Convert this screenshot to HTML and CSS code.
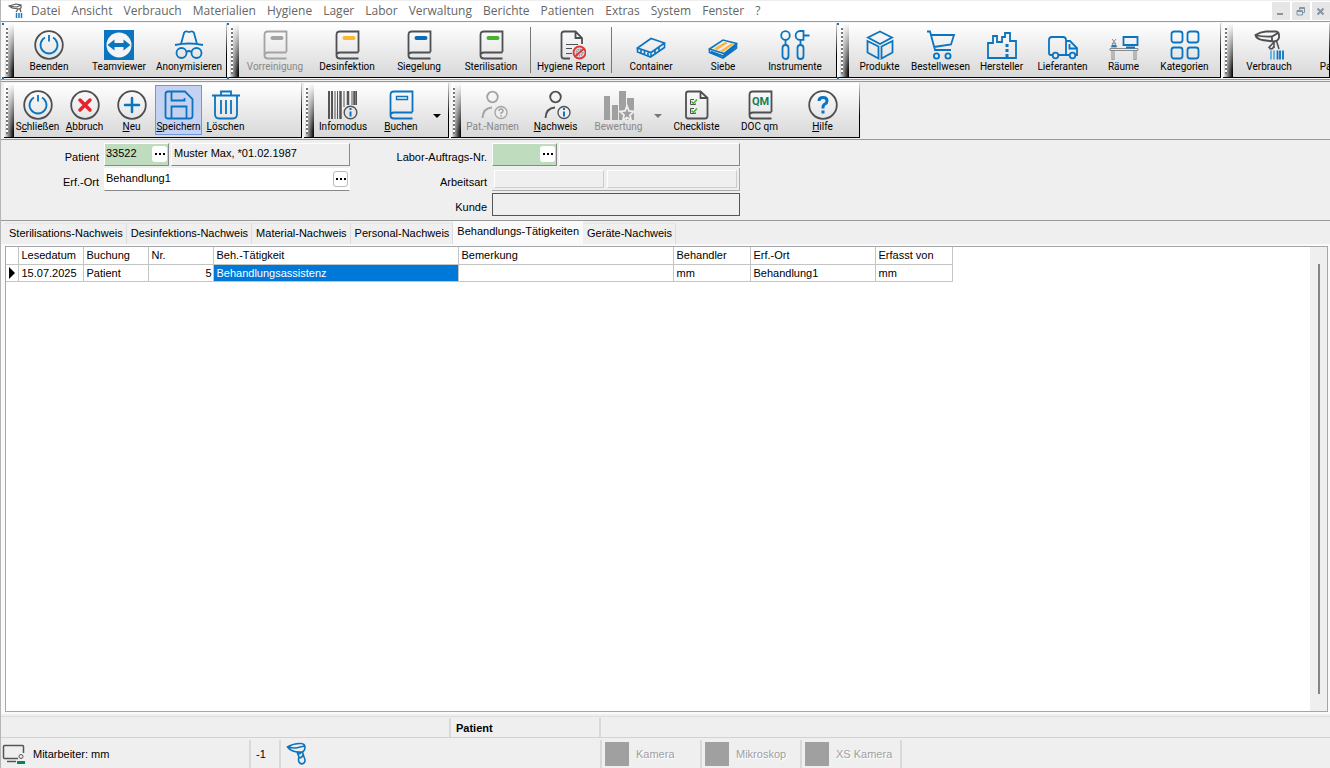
FILE: index.html
```html
<!DOCTYPE html>
<html lang="de">
<head>
<meta charset="utf-8">
<title>Behandlungs-Tätigkeiten</title>
<link rel="stylesheet" href="styles.css">
</head>
<body>
<svg class="defs" aria-hidden="true">
  <symbol id="power" viewBox="0 0 30 30"><circle cx="15" cy="15" r="13.800" class="d"/><path class="b" d="M11 7.500A8.500 8.500 0 1 0 19 7.500M15 5v6.500"/></symbol>
  <symbol id="book" viewBox="0 0 30 30"><path d="M26.500 22V1.500H8Q4.500 1.500 4.500 5V25.500Q4.500 28.500 8 28.500H26.500M4.500 25Q4.500 22.500 8 22.500H26.500"/></symbol>
  <symbol id="person" viewBox="0 0 30 30"><circle cx="14.500" cy="7" r="5.300"/><path d="M4.500 28Q5 18 14 17.500"/></symbol>
</svg>
<div class="app">
  <header class="menubar">
    <svg class="logo" viewBox="0 0 16 16"><path d="M1 3L8 1L13 2V5L11 6L4 5ZM3 3.500L9 4L12 2.500M10 6L8 9M12 6L13 9" fill="none" stroke="#555" stroke-width="1.200"/><path d="M8.500 10v5M11 10v5M13.500 10v5" stroke="#1a7cc4" stroke-width="1.500"/></svg>
    <nav class="menus">
      <button>Datei</button><button>Ansicht</button><button>Verbrauch</button><button>Materialien</button><button>Hygiene</button><button>Lager</button><button>Labor</button><button>Verwaltung</button><button>Berichte</button><button>Patienten</button><button>Extras</button><button>System</button><button>Fenster</button><button>?</button>
    </nav>
    <div class="winbtns">
      <button aria-label="Minimieren"><svg viewBox="0 0 17 17"><path d="M5 11h6" stroke-width="2"/></svg></button>
      <button aria-label="Wiederherstellen"><svg viewBox="0 0 17 17"><path d="M7.500 7V4.500h5v5h-2M5 7.500h5.500v4.500H5zM5 8.500h5M7.500 5.500h5"/></svg></button>
      <button aria-label="Schließen"><svg viewBox="0 0 17 17"><path d="M5.500 5.500l6 6M11.500 5.500l-6 6" stroke-width="2"/></svg></button>
    </div>
  </header>

  <div class="toolbar">
    <div class="group marks w70 g-start">
      <i class="grip"></i>
      <button class="tool"><svg><use href="#power"/></svg>Beenden</button>
      <button class="tool"><svg viewBox="0 0 30 30"><path fill="#0b74c0" d="M0 0h30v30H0z"/><circle cx="15" cy="15" r="12.500" fill="#f4f4f4"/><path fill="#0b74c0" d="M3.500 15l7-5.500v3.500h9V9.500l7 5.500-7 5.500V17h-9v3.500z"/></svg>Teamviewer</button>
      <button class="tool"><svg viewBox="0 0 30 30" class="b"><path d="M1 15Q15 12 29 15M7 14L10 3Q11 1 13 1.500L15 2L17 1.500Q19 1 20 3L23 14"/><circle cx="7.500" cy="23" r="5"/><circle cx="22.500" cy="23" r="5"/><path d="M12.500 22Q15 20 17.500 22"/></svg>Anonymisieren</button>
    </div>
    <div class="group marks w72">
      <i class="grip"></i>
      <button class="tool" disabled><svg viewBox="0 0 30 30" class="g"><use href="#book"/><path d="M12.500 8h9" stroke-width="4" stroke-linecap="round"/></svg>Vorreinigung</button>
      <button class="tool"><svg viewBox="0 0 30 30" class="d"><use href="#book"/><path d="M12.500 8h9" stroke="#fcb92c" stroke-width="4" stroke-linecap="round"/></svg>Desinfektion</button>
      <button class="tool"><svg viewBox="0 0 30 30" class="d"><use href="#book"/><path d="M12.500 8h9" stroke="#0b6cb8" stroke-width="4" stroke-linecap="round"/></svg>Siegelung</button>
      <button class="tool"><svg viewBox="0 0 30 30" class="d"><use href="#book"/><path d="M12.500 8h9" stroke="#4bb22e" stroke-width="4" stroke-linecap="round"/></svg>Sterilisation</button>
      <i class="sep"></i>
      <button class="tool report"><svg viewBox="0 0 30 30" class="d"><path d="M14 28.500H8Q5.500 28.500 5.500 26V4Q5.500 1.500 8 1.500H19.500L26 8V14M19.500 1.500V8H26"/><path d="M10 14.500h12M10 18.500h6M10 23.500h6" stroke-width="1.200"/><circle cx="23.500" cy="22.500" r="6" fill="#ddd" stroke="#d9393c"/><circle cx="23.500" cy="22.500" r="3" stroke="#888" stroke-dasharray="1 1"/><path d="M28 18.500l-9 8" stroke="#d9393c"/></svg>Hygiene Report</button>
      <i class="sep"></i>
      <button class="tool"><svg viewBox="0 0 30 30" class="b thin"><path d="M1.500 18L15 8.500L28.500 13L15 22.500ZM1.500 18V22L14.500 27L28.500 17.500V13M15 22.500V27M5 19.500v4M8.500 20.500v4M12 21.500v4M19 20v4M23 17v4"/></svg>Container</button>
      <button class="tool"><svg viewBox="0 0 30 30" class="b thin"><path d="M1.500 19L15 10L28.500 13.500L16 23.500ZM1.500 19V22.500L15 28L28.500 18V13.500M3 21.500L15 26L28 16"/><path d="M6 18.500L17 12L20 13L9 20ZM12 21L23 13.500L26 14L15 22Z" fill="#fcb337" stroke="none"/></svg>Siebe</button>
      <button class="tool"><svg viewBox="0 0 30 30" class="b"><circle cx="5.500" cy="5.500" r="4.300"/><path d="M5.500 10v5M20.500 10v5M23.500 5.500h6M23.500 1H20A4.400 4.400 0 0 0 20 9.800H23.500ZM23.500 1v9"/><rect x="2.500" y="15" width="6" height="14" rx="3"/><rect x="17.500" y="15" width="6" height="14" rx="3"/></svg>Instrumente</button>
    </div>
    <div class="group marks w61">
      <i class="grip"></i>
      <button class="tool"><svg viewBox="0 0 30 30" class="b"><path d="M15 1.500L27 7.500L15 14L3 7.500ZM2.500 11L13.500 16.500V28.500L2.500 22.500ZM27.500 11L16.500 16.500V28.500L27.500 22.500Z"/></svg>Produkte</button>
      <button class="tool"><svg viewBox="0 0 30 30" class="b"><path d="M1 1.500H4L9 20H25M5.500 5H28L25 14.500L8 17"/><circle cx="10.500" cy="26" r="2.600"/><circle cx="22" cy="26" r="2.600"/></svg>Bestellwesen</button>
      <button class="tool"><svg viewBox="0 0 30 30" class="b"><path d="M1 28V13H6V6H10V12H15V7H18V3H23V11H29V28Z"/><path d="M20 14v3M20 19v3M20 24v3" stroke-width="3"/></svg>Hersteller</button>
      <button class="tool"><svg viewBox="0 0 30 30" class="b"><path d="M5 25H3Q1 25 1 23V10Q1 7 4 7H15Q18 7 18 10V25H10M18 11H22L29 18V25H27M21.500 14v4.500H28M18 25h4"/><circle cx="7.500" cy="25.500" r="2.800"/><circle cx="24.500" cy="25.500" r="2.800"/></svg>Lieferanten</button>
      <button class="tool"><svg viewBox="0 0 30 30"><path d="M1 18.500H29V20.500H1ZM3 21V30H5V21M25 21V30H27V21" class="m"/><path d="M14.500 7H28.500V15H14.500ZM17 17.500H26" class="b"/><path d="M3 9l4 5M7 9l-4 5M2 17Q5 10 8 17Z" class="m"/><path d="M3 16h4" class="b"/></svg>Räume</button>
      <button class="tool"><svg viewBox="0 0 30 30" class="b"><rect x="1.500" y="1.500" width="11" height="11" rx="2.500"/><rect x="17.500" y="1.500" width="11" height="11" rx="2.500"/><rect x="1.500" y="17.500" width="11" height="11" rx="2.500"/><rect x="17.500" y="17.500" width="11" height="11" rx="2.500"/></svg>Kategorien</button>
    </div>
    <div class="group marks w72 last">
      <i class="grip"></i>
      <button class="tool"><svg viewBox="0 0 30 30" class="d"><path d="M1.500 5Q6 2 12 1.500H22Q25 2 25 5V8Q24 11 20 11.500L8 10Q2 8.500 1.500 5ZM1.500 5Q8 7 18 6.500L24 3M18 6.500V11"/><path d="M20 12L14.500 18M16 16Q15 19 17 19T20 16M20 12V18M22.500 11L25 19" stroke-width="1.500"/><path d="M17 20.500v9M20 20.500v9" stroke="#6bb2e5" stroke-width="2"/><path d="M23.500 20.500v9M26 20.500v9M29 20.500v9" stroke="#0b74c0"/></svg>Verbrauch</button>
      <button class="tool"><svg viewBox="0 0 30 30"></svg>Patienten</button>
    </div>
  </div>

  <div class="toolbar second">
    <div class="group w47 g-file">
      <i class="grip"></i>
      <button class="tool"><svg><use href="#power"/></svg><span>S<u>c</u>hließen</span></button>
      <button class="tool"><svg viewBox="0 0 30 30"><circle cx="15" cy="15" r="13.800" class="d"/><path d="M10 10l10 10M20 10L10 20" stroke="#e8212b" stroke-width="3.500" stroke-linecap="round"/></svg><span><u>A</u>bbruch</span></button>
      <button class="tool"><svg viewBox="0 0 30 30"><circle cx="15" cy="15" r="13.800" class="d"/><path d="M15 8v14M8 15h14" stroke="#0b74c0" stroke-width="2.500" stroke-linecap="round"/></svg><span><u>N</u>eu</span></button>
      <button class="tool active"><svg viewBox="0 0 30 30" class="b"><path d="M1.500 4Q1.500 1.500 4 1.500H21L28.500 9V26Q28.500 28.500 26 28.500H4Q1.500 28.500 1.500 26ZM7.500 1.500V10.500H20.500V8M7.500 28.500V16.500H22.500V28.500"/></svg><span><u>S</u>peichern</span></button>
      <button class="tool"><svg viewBox="0 0 30 30" class="b"><path d="M1 5.500H29M10 5V1.500H20V5M4 6V24Q4 28.500 8 28.500H22Q26 28.500 26 24V6M10 10V24M15 10V24M20 10V24"/></svg><span><u>L</u>öschen</span></button>
    </div>
    <div class="group w58 g-info">
      <i class="grip"></i>
      <button class="tool"><svg viewBox="0 0 30 30" class="k"><path d="M1 1v28M4 1v28" stroke-width="2"/><path d="M7 1v28M9.500 1v28M16 1v16M24 1v14M28.500 1v14" stroke-width="1"/><path d="M12.500 1v28M20 1v14M26.500 1v14" stroke-width="2.500"/><circle cx="22.500" cy="22.500" r="6.300" fill="#e6e6e6" class="thin"/><path d="M22.500 21.500v5M22.500 18v2" stroke="#0b74c0" stroke-width="2"/></svg>Infomodus</button>
      <button class="tool"><svg viewBox="0 0 30 30" class="b"><use href="#book"/><path class="thin" d="M10.500 6.500h11v3h-11z"/></svg><span><u>B</u>uchen</span></button>
      <button class="drop" aria-label="Buchen Optionen"></button>
    </div>
    <div class="group w63 g-proof">
      <i class="grip"></i>
      <button class="tool" disabled><svg viewBox="0 0 30 30" class="g"><use href="#person"/><circle cx="23" cy="22.500" r="6" fill="#eee" stroke-width="1.300"/><path stroke-width="1.500" d="M21 21Q21 19 23 19T25 21Q25 22 23 23V24M23 25v1.500"/></svg>Pat.-Namen</button>
      <button class="tool"><svg viewBox="0 0 30 30" class="d"><use href="#person"/><circle cx="23" cy="22.500" r="6" fill="#eee" stroke-width="1.300"/><path d="M23 21.500v5M23 18v2" stroke="#0b74c0" stroke-width="2"/></svg><span><u>N</u>achweis</span></button>
      <button class="tool" disabled><svg viewBox="0 0 30 30"><path fill="#a0a0a0" d="M0 6h6v24H0zM8 15h6v15H8zM15 1h7v29h-7zM23 8h7v22h-7z"/><path fill="#a0a0a0" stroke="#eee" d="M23 16l2 5 5 .5-4 3.500 1 5-4-2.500-4 2.500 1-5-4-3.500 5-.5z"/></svg>Bewertung</button>
      <button class="drop" disabled aria-label="Bewertung Optionen"></button>
      <button class="tool"><svg viewBox="0 0 30 30" class="d"><path d="M18.500 1.500H6Q4 1.500 4 4V26Q4 28.500 6 28.500H23Q25.500 28.500 25.500 26V8ZM18.500 1.500V8H25.500"/><path stroke-width="1" d="M12 9.500H8.500v5h5v-1M12 18.500H8.500v5h5v-1"/><path d="M9.500 11.500l2 2 3.500-4M9.500 20.500l2 2 3.500-4" stroke="#4bb22e" stroke-width="1.500"/></svg>Checkliste</button>
      <button class="tool"><svg viewBox="0 0 30 30" class="d"><use href="#book"/><text x="7" y="15" class="qm">QM</text></svg>DOC qm</button>
      <button class="tool"><svg viewBox="0 0 30 30"><circle cx="15" cy="15" r="13.800" class="d"/><path d="M11 11Q11 7.500 15 7.500T19 11Q19 13 17 14T15 17.500V18.500M15 20.500v3" fill="none" stroke="#0b74c0" stroke-width="3"/></svg><span><u>H</u>ilfe</span></button>
    </div>
  </div>

  <form class="form">
    <div class="fields">
      <label for="pat">Patient</label>
      <div class="line"><span class="lookup green"><input id="pat" value="33522"><button type="button" aria-label="Patient suchen"></button></span><input class="box grow" aria-label="Patientenname" value="Muster Max, *01.02.1987" readonly></div>
      <label for="ort">Erf.-Ort</label>
      <div class="line"><span class="lookup white"><input id="ort" value="Behandlung1"><button type="button" aria-label="Ort suchen"></button></span></div>
    </div>
    <div class="fields right">
      <label for="lab">Labor-Auftrags-Nr.</label>
      <div class="line"><span class="lookup green"><input id="lab"><button type="button" aria-label="Auftrag suchen"></button></span><input class="box grow" aria-label="Auftrag" readonly></div>
      <label for="art">Arbeitsart</label>
      <div class="line panel"><input id="art" class="flat" readonly><input class="flat grow" aria-label="Arbeitsart Text" readonly></div>
      <label for="kunde">Kunde</label>
      <div class="line"><input id="kunde" class="frame grow" readonly></div>
    </div>
  </form>

  <div class="tabs" role="tablist">
    <button role="tab">Sterilisations-Nachweis</button><button role="tab">Desinfektions-Nachweis</button><button role="tab">Material-Nachweis</button><button role="tab">Personal-Nachweis</button><button role="tab" aria-selected="true">Behandlungs-Tätigkeiten</button><button role="tab">Geräte-Nachweis</button>
  </div>

  <main class="page">
    <div class="grid">
      <div class="cells">
        <table>
          <colgroup><col class="c12"><col class="c65"><col class="c65"><col class="c65"><col class="c245"><col class="c215"><col class="c77"><col class="c125"><col class="c77"></colgroup>
          <thead><tr><th></th><th>Lesedatum</th><th>Buchung</th><th>Nr.</th><th>Beh.-Tätigkeit</th><th>Bemerkung</th><th>Behandler</th><th>Erf.-Ort</th><th>Erfasst von</th></tr></thead>
          <tbody><tr><td class="cursor"><i></i></td><td>15.07.2025</td><td>Patient</td><td class="num">5</td><td class="sel">Behandlungsassistenz</td><td></td><td>mm</td><td>Behandlung1</td><td>mm</td></tr></tbody>
        </table>
      </div>
      <div class="scroll"><i></i></div>
    </div>
  </main>

  <footer>
    <div class="status top"><span class="s450"></span><span class="s150"><b>Patient</b></span></div>
    <div class="status">
      <span class="s250"><svg class="pc" viewBox="0 0 24 22"><path d="M16 15.500H2.500Q1.500 15.500 1.500 14.500V3.500Q1.500 2.500 2.500 2.500H20.500Q21.500 2.500 21.500 3.500V10M5 18.500h9" fill="none" stroke="#555" stroke-width="1.500"/><circle cx="19" cy="13.500" r="2" fill="none" stroke="#555"/><path d="M15 21v-3h8v3z" fill="#11805a"/></svg>Mitarbeiter: mm</span>
      <span class="s30">-1</span>
      <span class="s321"><svg class="gun" viewBox="0 0 22 24"><path d="M1.500 5Q8 1 15 1.500Q19 2 19 5Q19 9 16 10Q6 11 1.500 5ZM2 5Q9 7 14 5L19 4M11 10L13 15Q12 18 13 20Q15 23 18 21Q20 19 18 15L16.500 10M12 12q3 0 3-2M13 16q3 0 4-3" fill="none" stroke="#0b74c0" stroke-width="1.600"/></svg></span>
      <span class="s100 off"><i></i>Kamera</span>
      <span class="s100 off"><i></i>Mikroskop</span>
      <span class="s100 off"><i></i>XS Kamera</span>
    </div>
  </footer>
</div>
</body>
</html>
```
FILE: styles.css
```css
* { box-sizing: border-box; }
body { margin: 0; background: #efefef; color: #000; font: 11px/14px "Liberation Sans", Arial, sans-serif; }
button, input { font: inherit; color: inherit; margin: 0; padding: 0; border: 0; background: none; border-radius: 0; min-width: 0; }
i { display: block; flex: none; }
.defs { position: absolute; width: 0; height: 0; }
.app { display: flex; flex-direction: column; height: 100vh; border-left: 1px solid #b5b5b5; overflow: hidden; }

/* menu */
.menubar { display: flex; align-items: center; flex: none; height: 22px; background: #fff; border-bottom: 1px solid #999; border-top: 1px solid #eee; padding-left: 7px; }
.logo { width: 16px; height: 16px; margin-right: 7px; }
.menus { display: flex; gap: 11px; flex: 1; font: 12px/18px "Open Sans", "Noto Sans", sans-serif; color: #666; }
.winbtns { display: flex; gap: 2px; }
.winbtns button { width: 18px; height: 18px; background: #e6e6e6; }
.winbtns svg { display: block; width: 17px; height: 17px; fill: none; stroke: #8496a6; }

/* toolbars */
.toolbar { display: flex; gap: 2px; flex: none; height: 58px; padding: 1px 0 1px 3px; border-bottom: 1px solid #999; overflow: hidden; background: #f8f8f8; }
.second { height: 59px; border-top: 1px solid #999; margin-top: 1px; background: #efefef; }
.group { position: relative; display: flex; flex: none; background: linear-gradient(#fff, #d8d8d8); border: solid; border-width: 0 1px 1px 0; border-image: linear-gradient(#ddd, #000 60%) 1; padding-right: 5px; }
.g-start { padding-right: 2px; }
.group.last { flex: 1; min-width: 0; overflow: hidden; padding: 0; }
.marks::before { content: ""; position: absolute; left: -2px; top: 0; width: 3px; height: 2px; background: #0b74c0; }
.marks::after { content: ""; position: absolute; left: -2px; bottom: -2px; width: 2px; height: 2px; background: #0b74c0; }
.grip { width: 10px; background: linear-gradient(90deg, #fff, transparent), linear-gradient(#fff, #000 90%); position: relative; }
.grip::after { content: ""; position: absolute; left: 2px; top: 3px; bottom: 3px; width: 2px; background: repeating-linear-gradient(#fff 0 2px, #777 2px 4px); }
.sep { width: 1px; background: #777; margin: 4px 3px; }
.tool { display: flex; flex-direction: column; align-items: center; flex: none; padding-top: 7px; font: 10px/12px Roboto, "Noto Sans", sans-serif; white-space: nowrap; gap: 1px; }
.tool svg { width: 30px; height: 30px; flex: none; fill: none; stroke-width: 1.8; }
.w70 .tool { width: 70px; }
.w72 .tool { width: 72px; }
.w61 .tool { width: 61px; }
.w47 .tool { width: 47px; }
.w58 .tool { width: 58px; }
.w63 .tool { width: 63px; }
.w72 .report { width: 74px; }
.tool:disabled { color: #888; }
.second .active { background: #c5d1f0; border: 1px solid #7096dd; height: 50px; margin-top: 2px; padding-top: 4px; }
.g-file { width: 298px; }
.g-info { width: 145px; }
.g-proof { width: 409px; }
.b { fill: none; stroke: #0b74c0; }
.d { fill: none; stroke: #4d4f53; }
.g { fill: none; stroke: #a3a3a3; }
.m { fill: none; stroke: #888; stroke-width: 1; }
.k { fill: none; stroke: #555; }
.thin { stroke-width: 1.4; }
.tool svg.thin { stroke-width: 1.6; }
.qm { font: bold 11px Roboto, sans-serif; fill: #11805a; stroke: none; }
.drop { width: 16px; display: grid; place-items: center; padding-top: 12px; }
.drop::before { content: ""; border: 4px solid transparent; border-top-color: #000; border-bottom: 0; }
.drop:disabled::before { border-top-color: #777; }

/* form */
.form { display: flex; gap: 50px; flex: none; height: 81px; padding: 3px 0 0 3px; border-bottom: 1px solid #999; }
.fields { display: grid; grid-template-columns: 95px 246px; grid-auto-rows: 23px; row-gap: 2px; column-gap: 5px; align-content: start; }
.fields.right { grid-template-columns: 87px 248px; }
.fields label { text-align: right; padding-top: 7px; white-space: nowrap; }
.fields.right label { margin-left: -20px; }
.line { display: flex; gap: 2px; min-width: 0; }
.lookup { display: flex; width: 65px; border: 1px solid #fff; border-right-color: #888; border-bottom-color: #888; padding: 0 1px; }
.lookup input { flex: 1; width: 0; padding-bottom: 3px; }
.lookup button { display: grid; place-items: center; width: 15px; height: 16px; margin: 2px 0; background: #fff; border-radius: 3px; }
.lookup button::before { content: ""; width: 10px; height: 2px; background: repeating-linear-gradient(90deg, #000 0 2px, transparent 2px 4px); }
.green { background: #bfdcbf; }
.white { flex: 1; background: #fff; border-right-color: #fff; }
.white button { border: 1px solid #bbb; }
.grow { flex: 1; }
.box { border: 1px solid #fff; border-right-color: #888; border-bottom-color: #888; padding: 0 2px 3px; }
.panel { padding: 2px; border-right: 1px solid #aaa; border-bottom: 1px solid #aaa; gap: 3px; }
.flat { border: 1px solid #ccc; border-top-color: #fff; border-left-color: #fff; }
#art { width: 110px; }
.frame { border: 1px solid #555; }

/* tabs */
.tabs { display: flex; align-items: flex-end; flex: none; height: 23px; padding: 0 4px; }
.tabs button { height: 21px; padding: 0 3px 2px 4px; border-right: 1px solid #ddd; border-top: 1px solid #e6e6e6; white-space: nowrap; }
.tabs [aria-selected] { height: 23px; padding: 0 4px 4px; background: #fafafa; border: 0; }
.page { flex: 1; min-height: 0; border-top: 2px solid #fafafa; padding: 0 2px 2px 4px; background: #fafafa; }
.grid { display: flex; height: 100%; background: #fff; border: 1px solid #a4a6aa; }
.cells { flex: 1; min-width: 0; overflow: hidden; }
.scroll { width: 17px; background: #efefef; display: flex; justify-content: center; padding: 17px 0; }
.scroll i { width: 2px; background: #858585; }
table { border-collapse: collapse; table-layout: fixed; width: 946px; }
th, td { font-weight: normal; text-align: left; padding: 0 2px 0 3px; height: 17px; line-height: 16px; border-right: 1px solid #c4c4c4; border-bottom: 1px solid #c4c4c4; white-space: nowrap; }
th { height: 17px; }
td.num { text-align: right; padding-right: 1px; }
.sel { background: #0078d7; color: #fff; }
.cursor { padding: 0 3px; }
.cursor i { width: 0; border: 6px solid transparent; border-left-color: #000; border-right: 0; }
.c12 { width: 12px; }
.c65 { width: 65px; }
.c77 { width: 77px; }
.c125 { width: 125px; }
.c215 { width: 215px; }
.c245 { width: 245px; }

/* status */
footer { flex: none; border-top: 1px solid #ddd; margin-top: 2px; }
.status { display: flex; height: 30px; padding-top: 2px; }
.status.top { height: 21px; border-bottom: 1px solid #d2d2d2; padding-top: 1px; }
.status span { display: flex; align-items: center; flex: none; border-right: 2px solid #d9d9d9; padding-left: 5px; }
.status .s450 { width: 450px; }
.s150 { width: 150px; }
.status .s250 { width: 250px; padding-left: 1px; gap: 7px; }
.s30 { width: 30px; }
.s321 { width: 321px; }
.s100 { width: 100px; }
.status .off { color: #a0a0a0; text-shadow: 1px 1px #fff; padding-left: 3px; gap: 7px; }
.off i { width: 24px; height: 24px; background: #a0a0a0; }
.pc { width: 24px; height: 22px; }
.gun { width: 22px; height: 24px; }
```
